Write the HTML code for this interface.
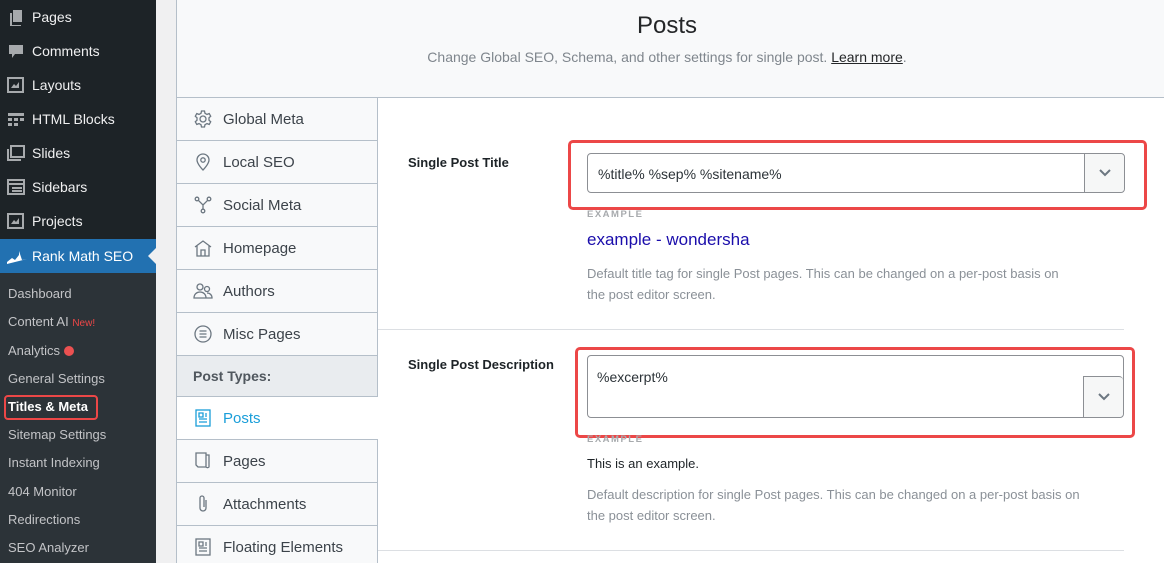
<!DOCTYPE html>
<html><head><meta charset="utf-8"><style>
*{box-sizing:border-box;margin:0;padding:0}
html{width:1164px;height:563px;overflow:hidden}
body{width:1164px;height:563px;overflow:hidden;font-family:"Liberation Sans",sans-serif;background:#f0f0f1;position:relative}
.sb{position:absolute;left:0;top:0;width:156px;height:563px;background:#1d2327}
.mi{position:absolute;left:0;height:34px;width:156px;color:#f0f0f1;font-size:14px;display:flex;align-items:center}
.mi svg{position:absolute;left:6px}
.mi span{position:absolute;left:32px}
.act{background:#2271b1;color:#fff}
.sub{position:absolute;left:0;top:273px;width:156px;height:290px;background:#2c3338}
.si{position:absolute;left:8px;font-size:13px;color:#c3c4c7}
.panel{position:absolute;left:176px;top:0;width:988px;height:563px;background:#fff;border-left:1px solid #b5bfc9;overflow:hidden}
.hdr{position:absolute;left:0;top:0;width:988px;height:98px;background:#f8f9fa;border-bottom:1px solid #b5bfc9}
.hdr h1{position:absolute;left:0;width:980px;top:12px;text-align:center;font-size:24px;font-weight:500;color:#242628}
.hdr p{position:absolute;left:0;width:980px;top:49px;text-align:center;font-size:14px;color:#7f868d}
.hdr a{color:#242628;text-decoration:underline}
.tabs{position:absolute;left:0;top:98px;width:201px}
.tab{height:43px;border-bottom:1px solid #b5bfc9;border-right:1px solid #b5bfc9;background:#f8f9fa;display:flex;align-items:center;font-size:15px;color:#3c434a;position:relative}
.tab svg{position:absolute;left:16px}
.tab span{position:absolute;left:46px}
.tab.pt{background:#e9ecef;font-weight:bold;font-size:14px;color:#50575e;height:41px}
.tab.pt span{left:16px}
.tab.on{background:#fff;border-right:none;color:#1a9ed9}
.lbl{position:absolute;left:231px;font-size:13px;font-weight:bold;color:#1d2327}
.red{position:absolute;border:3px solid #ec4747;border-radius:5px}
.inp{position:absolute;background:#fff;border:1px solid #8c8f94;border-radius:4px;font-size:14px;color:#2c3338}
.dd{position:absolute;right:0;width:40px;background:#f6f7f7;border-left:1px solid #8c8f94;border-radius:0 4px 4px 0}
.ex{position:absolute;left:410px;font-size:9.5px;font-weight:bold;letter-spacing:1.5px;color:#a7aaad}
.desc{position:absolute;left:410px;width:560px;font-size:13px;line-height:21px;color:#8a9097}
.hr{position:absolute;left:201px;width:746px;height:1px;background:#dcdfe3}
</style></head><body>
<div class="sb">
<div class="mi" style="top:0"><svg width="20" height="20" viewBox="0 0 20 20"><path d="M7 3h9v12H7z M4 6h2v12h9v1H4z" fill="#a7aaad"/></svg><span>Pages</span></div>
<div class="mi" style="top:34px"><svg width="20" height="20" viewBox="0 0 20 20"><path d="M3 4h14v9H9l-3 4v-4H3z" fill="#a7aaad"/></svg><span>Comments</span></div>
<div class="mi" style="top:68px"><svg width="20" height="20" viewBox="0 0 20 20"><rect x="2" y="3" width="15" height="14" fill="none" stroke="#a7aaad" stroke-width="2"/><path d="M5 13l3-4 2 2 3-4v6z" fill="#a7aaad"/></svg><span>Layouts</span></div>
<div class="mi" style="top:102px"><svg width="20" height="20" viewBox="0 0 20 20"><path d="M2 4h16v3H2zM2 9h4v3H2zM8 9h4v3H8zM14 9h4v3h-4zM2 14h4v3H2zM8 14h4v3H8z" fill="#a7aaad"/></svg><span>HTML Blocks</span></div>
<div class="mi" style="top:136px"><svg width="20" height="20" viewBox="0 0 20 20"><rect x="5" y="3" width="13" height="11" fill="none" stroke="#a7aaad" stroke-width="2"/><path d="M2 6v11h13" fill="none" stroke="#a7aaad" stroke-width="2"/></svg><span>Slides</span></div>
<div class="mi" style="top:170px"><svg width="20" height="20" viewBox="0 0 20 20"><rect x="2" y="3" width="16" height="14" fill="none" stroke="#a7aaad" stroke-width="2"/><path d="M2 7h16M6 11h10M6 14h10" stroke="#a7aaad" stroke-width="2"/></svg><span>Sidebars</span></div>
<div class="mi" style="top:204px"><svg width="20" height="20" viewBox="0 0 20 20"><rect x="2" y="3" width="15" height="14" fill="none" stroke="#a7aaad" stroke-width="2"/><path d="M5 13l3-4 2 2 3-4v6z" fill="#a7aaad"/></svg><span>Projects</span></div>
<div class="mi act" style="top:239px"><svg width="22" height="20" viewBox="0 0 22 20"><path d="M1 16l5-4 3 2 4-5v-4l3 9 5-1-20 5z" fill="#fff"/></svg><span>Rank Math SEO</span><div style="position:absolute;right:0;top:9px;border:8px solid transparent;border-right-color:#f0f0f1"></div></div>
</div>
<div class="sub">
<div class="si" style="top:13px">Dashboard</div>
<div class="si" style="top:41px">Content AI <span style="color:#ec4747;font-size:10px">New!</span></div>
<div class="si" style="top:70px">Analytics <span style="display:inline-block;width:10px;height:10px;border-radius:5px;background:#ec5151;vertical-align:-1px"></span></div>
<div class="si" style="top:98px">General Settings</div>
<div class="si" style="top:126px;color:#fff;font-weight:bold">Titles &amp; Meta</div>
<div style="position:absolute;left:4px;top:122px;width:94px;height:25px;border:2px solid #ec4747;border-radius:4px"></div>
<div class="si" style="top:154px">Sitemap Settings</div>
<div class="si" style="top:182px">Instant Indexing</div>
<div class="si" style="top:211px">404 Monitor</div>
<div class="si" style="top:239px">Redirections</div>
<div class="si" style="top:267px">SEO Analyzer</div>
</div>
<div class="panel">
<div class="hdr"><h1>Posts</h1><p>Change Global SEO, Schema, and other settings for single post. <a>Learn more</a>.</p></div>
<div class="tabs">
<div class="tab"><svg width="20" height="20" viewBox="0 0 20 20" fill="none" stroke="#6c7781" stroke-width="1.3"><circle cx="10" cy="10" r="3"/><path d="M8.5 2h3l.5 2.3 2 1.1 2.2-.8 1.5 2.6-1.7 1.6v2.4l1.7 1.6-1.5 2.6-2.2-.8-2 1.1-.5 2.3h-3l-.5-2.3-2-1.1-2.2.8-1.5-2.6 1.7-1.6V8.8L2.3 7.2l1.5-2.6 2.2.8 2-1.1z"/></svg><span>Global Meta</span></div>
<div class="tab"><svg width="20" height="20" viewBox="0 0 20 20" fill="none" stroke="#6c7781" stroke-width="1.3"><path d="M10 18s-6-6-6-10a6 6 0 0112 0c0 4-6 10-6 10z"/><circle cx="10" cy="8" r="2.2"/></svg><span>Local SEO</span></div>
<div class="tab"><svg width="20" height="20" viewBox="0 0 20 20" fill="none" stroke="#6c7781" stroke-width="1.3"><circle cx="4" cy="4" r="1.8"/><circle cx="16" cy="4" r="1.8"/><circle cx="10" cy="16" r="1.8"/><path d="M5.3 5.3L10 10l4.7-4.7M10 10v4.2"/></svg><span>Social Meta</span></div>
<div class="tab"><svg width="20" height="20" viewBox="0 0 20 20" fill="none" stroke="#6c7781" stroke-width="1.3"><path d="M2 9l8-6 8 6M4 8v10h12V8M8 18v-6h4v6"/></svg><span>Homepage</span></div>
<div class="tab"><svg width="20" height="20" viewBox="0 0 20 20" fill="none" stroke="#6c7781" stroke-width="1.3"><circle cx="7" cy="6" r="3"/><circle cx="14" cy="8" r="2.5"/><path d="M1 17c0-4 3-6 6-6s6 2 6 6zM13 17h6c0-3-2-5-5-5"/></svg><span>Authors</span></div>
<div class="tab"><svg width="20" height="20" viewBox="0 0 20 20" fill="none" stroke="#6c7781" stroke-width="1.3"><circle cx="10" cy="10" r="8"/><path d="M6.5 7h7M6.5 10h7M6.5 13h7"/></svg><span>Misc Pages</span></div>
<div class="tab pt"><span>Post Types:</span></div>
<div class="tab on"><svg width="20" height="20" viewBox="0 0 20 20" fill="none" stroke="#1a9ed9" stroke-width="1.3"><rect x="3" y="2" width="14" height="16"/><path d="M6 5h4v4H6zM12 6h2M12 8h2M6 11h8M6 14h8"/></svg><span>Posts</span></div>
<div class="tab"><svg width="20" height="20" viewBox="0 0 20 20" fill="none" stroke="#6c7781" stroke-width="1.3"><path d="M3 2h10v14H5l-2-2zM13 4h3v12a2 2 0 01-3 0"/></svg><span>Pages</span></div>
<div class="tab"><svg width="20" height="20" viewBox="0 0 20 20" fill="none" stroke="#6c7781" stroke-width="1.3"><path d="M13 6v8a3 3 0 01-6 0V4a2 2 0 014 0v9"/></svg><span>Attachments</span></div>
<div class="tab"><svg width="20" height="20" viewBox="0 0 20 20" fill="none" stroke="#6c7781" stroke-width="1.3"><rect x="3" y="2" width="14" height="16"/><path d="M6 5h4v4H6zM12 6h2M12 8h2M6 11h8M6 14h8"/></svg><span>Floating Elements</span></div>
</div>
<div class="lbl" style="top:155px">Single Post Title</div>
<div class="red" style="left:391px;top:140px;width:579px;height:70px"></div>
<div class="inp" style="left:410px;top:153px;width:538px;height:40px"><span style="position:absolute;left:10px;top:12px">%title% %sep% %sitename%</span><div class="dd" style="top:0;height:38px"><svg style="position:absolute;left:13px;top:13px" width="14" height="12" viewBox="0 0 14 12"><path d="M2 3l5 5 5-5" fill="none" stroke="#6c7781" stroke-width="2"/></svg></div></div>
<div class="ex" style="top:209px">EXAMPLE</div>
<div style="position:absolute;left:410px;top:230px;font-size:17px;color:#1a0dab">example - wondersha</div>
<div class="desc" style="top:263px">Default title tag for single Post pages. This can be changed on a per-post basis on<br>the post editor screen.</div>
<div class="hr" style="top:329px"></div>
<div class="lbl" style="top:357px">Single Post Description</div>
<div class="red" style="left:398px;top:347px;width:560px;height:91px"></div>
<div class="inp" style="left:410px;top:355px;width:537px;height:63px"><span style="position:absolute;left:9px;top:13px">%excerpt%</span><div class="dd" style="top:20px;height:41px;border-top:1px solid #8c8f94"><svg style="position:absolute;left:13px;top:14px" width="14" height="12" viewBox="0 0 14 12"><path d="M2 3l5 5 5-5" fill="none" stroke="#6c7781" stroke-width="2"/></svg></div></div>
<div class="ex" style="top:434px">EXAMPLE</div>
<div style="position:absolute;left:410px;top:456px;font-size:13px;color:#1d2327">This is an example.</div>
<div class="desc" style="top:484px">Default description for single Post pages. This can be changed on a per-post basis on<br>the post editor screen.</div>
<div class="hr" style="top:550px"></div>
</div>
</body></html>
